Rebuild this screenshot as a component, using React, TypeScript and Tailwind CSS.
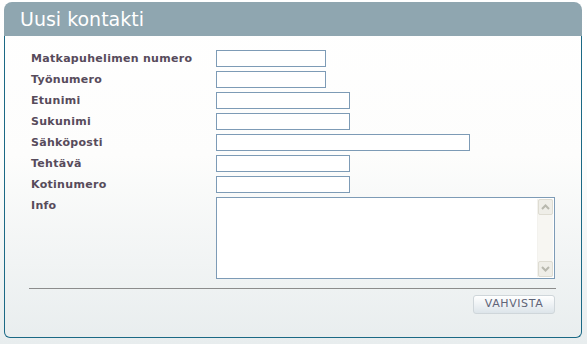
const fields = [
  { label: "Matkapuhelimen numero", w: "w-[110px]" },
  { label: "Työnumero", w: "w-[110px]" },
  { label: "Etunimi", w: "w-[134px]" },
  { label: "Sukunimi", w: "w-[134px]" },
  { label: "Sähköposti", w: "w-[254px]" },
  { label: "Tehtävä", w: "w-[134px]" },
  { label: "Kotinumero", w: "w-[134px]" },
];

function Chevron({ down }: { down?: boolean }) {
  return (
    <svg width="9" height="6" viewBox="0 0 9 6" className={down ? "rotate-180" : ""}>
      <path d="M1 5 L4.5 1.5 L8 5" fill="none" stroke="#b8b8ae" strokeWidth="2" />
    </svg>
  );
}

export default function App() {
  return (
    <div className="h-[344px] w-[587px] bg-[linear-gradient(180deg,#ffffff_0%,#fdfdfc_45%,#e8edee_100%)] pt-[2px] pl-[4px] font-['DejaVu_Sans',sans-serif]">
      <div className="flex h-[336px] w-[578px] flex-col">
        <div className="flex h-[34px] items-center rounded-t-[8px] bg-[#8fa6b0] pl-[16px] pt-[1px] text-[19px] text-white">
          Uusi kontakti
        </div>
        <div className="flex flex-1 flex-col rounded-b-[6px] border-x border-b border-[#1b6985] pt-[14px]">
          <div className="flex flex-col gap-[4px] pl-[26px]">
            {fields.map((f) => (
              <div key={f.label} className="flex h-[17px] items-center">
                <span className="w-[185px] pt-[2px] text-[11px] font-bold tracking-[0.3px] text-[#574b5b]">{f.label}</span>
                <div className={`h-[17px] ${f.w} border border-[#7d9bb6] bg-white`} />
              </div>
            ))}
            <div className="flex items-start">
              <span className="flex h-[17px] w-[185px] items-center pt-[2px] text-[11px] font-bold tracking-[0.3px] text-[#574b5b]">Info</span>
              <div className="flex h-[82px] w-[339px] border border-[#7d9bb6] bg-white">
                <div className="flex-1" />
                <div className="my-[1px] mr-[1px] flex w-[16px] flex-col justify-between border-l border-[#f3f2ee] bg-[#f7f6f2]">
                  <div className="flex h-[16px] items-center justify-center rounded-[2px] border border-[#dedcd2] bg-[#efeee8]">
                    <Chevron />
                  </div>
                  <div className="flex h-[16px] items-center justify-center rounded-[2px] border border-[#dedcd2] bg-[#efeee8]">
                    <Chevron down />
                  </div>
                </div>
              </div>
            </div>
          </div>
          <div className="mt-[9px] ml-[24px] h-px w-[527px] bg-[#8c8c8c]" />
          <div className="mr-[26px] mt-[6px] flex justify-end">
            <button className="flex h-[19px] w-[82px] items-center justify-center rounded-[3px] border border-[#cfd6da] bg-[linear-gradient(180deg,#ffffff,#dde5ea)] text-[11px] tracking-[0.6px] text-[#5f6478]">
              VAHVISTA
            </button>
          </div>
        </div>
      </div>
    </div>
  );
}
